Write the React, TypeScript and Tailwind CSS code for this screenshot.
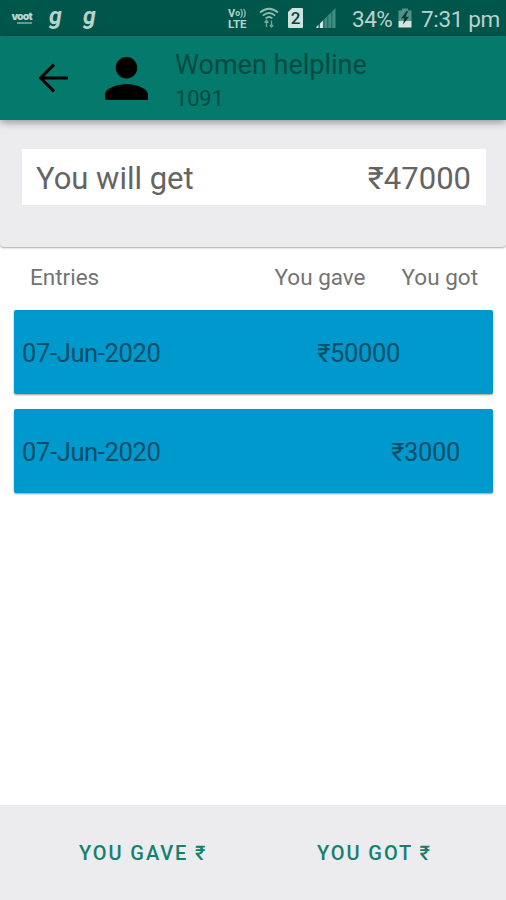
import type { ReactNode } from "react";

const CONTENT_FONT = "font-['Roboto','Noto_Sans',sans-serif]";

function VoLteIcon() {
  return (
    <div className="flex w-[20px] flex-col font-bold text-[#b4d2cc]">
      <div className="flex h-[11px] items-center">
        <span className="text-[11px] leading-[11px]">V</span>
        <span className="text-[8.5px] leading-[11px]">o))</span>
      </div>
      <span className="text-[11.5px] leading-[11px]">LTE</span>
    </div>
  );
}

function WifiIcon() {
  return (
    <svg width="20" height="22" viewBox="0 0 20 22" fill="none" stroke="#8fbab2" strokeWidth="1.7">
      <path d="M1 5.5Q10 -2 19 5.5" />
      <path d="M3.8 8.6Q10 3.4 16.2 8.6" />
      <path d="M6.6 11.4Q10 8.6 13.4 11.4" />
      <path d="M7.5 13.5V20M5.5 15.5L7.5 13.3L9.5 15.5M12.5 13.5V20M10.8 18L12.5 20L14.2 18" stroke="#6fa59b" strokeWidth="1.3" />
    </svg>
  );
}

function SimIcon() {
  return (
    <div className="flex h-[20px] w-[15px] items-center justify-center rounded-[1px] bg-[#cfe3de] text-[17px] leading-[20px] font-medium text-[#00463d] [clip-path:polygon(28%_0,100%_0,100%_100%,0_100%,0_20%)]">
      2
    </div>
  );
}

function SignalIcon() {
  return (
    <svg width="20" height="20" viewBox="0 0 20 20">
      <path d="M0.5 20V19L19.5 0V20Z" fill="#3f8c80" />
      <path d="M0.5 20V18.5L2.5 17V20ZM4 20V15.5L7 12.5V20Z" fill="#d5e6e2" />
      <path d="M3.2 20V16M7.8 20V11.5M11.8 20V7.5M15.8 20V3.5" stroke="#11675b" strokeWidth="0.9" />
    </svg>
  );
}

function BatteryIcon() {
  return (
    <svg width="14" height="20" viewBox="0 0 14 20">
      <path d="M4 0.5H10V2.5H13.5V13H0.5V2.5H4Z" fill="#4f9287" />
      <path d="M0.5 13H13.5V19.5H0.5Z" fill="#d5e4e1" />
      <path d="M8.5 3L3 10.5H6.3L5 16.5L11 8.8H7.6L10 3Z" fill="#063b35" />
    </svg>
  );
}

function StatusBar() {
  return (
    <div className="flex h-[36px] items-center bg-[#00564a] text-[#b9d2cd]">
      <div className="ml-[10px] flex w-[22px] flex-col items-end pt-[1px] font-['Inter','Roboto',sans-serif]">
        <span className="text-[10.5px] leading-[8px] font-black tracking-[-0.8px]">voot</span>
        <span className="mt-[1px] h-[2px] w-[15px] bg-[#5f9b91]" />
      </div>
      <span className="ml-[17px] w-[13px] -translate-y-px text-[23px] leading-[24px] font-bold italic">g</span>
      <span className="ml-[21px] w-[13px] -translate-y-px text-[23px] leading-[24px] font-bold italic">g</span>
      <div className="ml-[132px] pt-[2px]"><VoLteIcon /></div>
      <div className="ml-[11px]"><WifiIcon /></div>
      <div className="ml-[9px]"><SimIcon /></div>
      <div className="ml-[13px]"><SignalIcon /></div>
      <span className="ml-[16px] w-[42px] pt-[1px] text-[22.5px] leading-[36px] tracking-[-0.5px] whitespace-nowrap">34%</span>
      <div className="ml-[4px]"><BatteryIcon /></div>
      <span className="ml-[9px] pt-[1px] text-[22.5px] leading-[36px] tracking-[-0.35px] whitespace-nowrap">7:31 pm</span>
    </div>
  );
}

function Header() {
  return (
    <header className="relative z-10 flex h-[84px] items-start bg-[#037a6b] shadow-[0_2px_8px_rgba(0,0,0,0.4)]">
      <svg className="mt-[24px] ml-[35px]" width="36" height="36" viewBox="0 0 36 36" fill="none" stroke="#000" strokeWidth="3">
        <path d="M33 18H5.5M19 4.6L5.6 18L19 31.4" />
      </svg>
      <svg className="mt-[21px] ml-[34px]" width="43" height="43" viewBox="4 4 16 16">
        <path d="M12 12c2.21 0 4-1.79 4-4s-1.79-4-4-4-4 1.79-4 4 1.79 4 4 4zm0 2c-2.67 0-8 1.34-8 4v2h16v-2c0-2.66-5.33-4-8-4z" />
      </svg>
      <div className="ml-[27px] flex flex-col pt-[13px] whitespace-nowrap text-[#034a42]">
        <span className="text-[27px] leading-[33px]">Women helpline</span>
        <span className="text-[22px] leading-[33px] tracking-[-0.2px]">1091</span>
      </div>
    </header>
  );
}

function Entry({ date, children }: { date: string; children: ReactNode }) {
  return (
    <div className="flex h-[84px] items-center rounded-[2px] bg-[#0099ce] pt-[2px] pl-[8px] text-[25.5px] leading-[32px] tracking-[-0.35px] whitespace-nowrap text-[#084e67] shadow-[0_1px_2px_rgba(0,0,0,0.4)]">
      <span className="grow">{date}</span>
      {children}
    </div>
  );
}

export default function App() {
  return (
    <div className={`flex h-[900px] w-[506px] flex-col overflow-hidden bg-white ${CONTENT_FONT}`}>
      <StatusBar />
      <Header />
      <section className="h-[127px] rounded-b-[4px] bg-[#ececee] pt-[29px] pr-[20px] pl-[22px] shadow-[0_1px_2px_rgba(0,0,0,0.35)]">
        <div className="flex h-[56px] items-center justify-between bg-white pt-[4px] pr-[15px] pl-[14px] text-[31px] leading-[36px] whitespace-nowrap text-[#646464]">
          <span>You will get</span>
          <span>₹47000</span>
        </div>
      </section>
      <div className="flex h-[63px] items-center pr-[28px] pb-[4px] pl-[30px] text-[22.5px] leading-[30px] whitespace-nowrap text-[#737373]">
        <span className="grow">Entries</span>
        <span className="mr-[36px]">You gave</span>
        <span>You got</span>
      </div>
      <main className="flex grow flex-col gap-[15px] pr-[13px] pl-[14px]">
        <Entry date="07-Jun-2020">
          <span className="mr-[93px]">₹50000</span>
        </Entry>
        <Entry date="07-Jun-2020">
          <span className="mr-[33px]">₹3000</span>
        </Entry>
      </main>
      <footer className="flex h-[95px] items-center bg-[#ececee] pt-px pl-[79px] text-[20px] leading-[28px] font-medium tracking-[1.9px] whitespace-nowrap text-[#15806f]">
        <button className="w-[238px] text-left">YOU GAVE ₹</button>
        <button className="text-left">YOU GOT ₹</button>
      </footer>
    </div>
  );
}
